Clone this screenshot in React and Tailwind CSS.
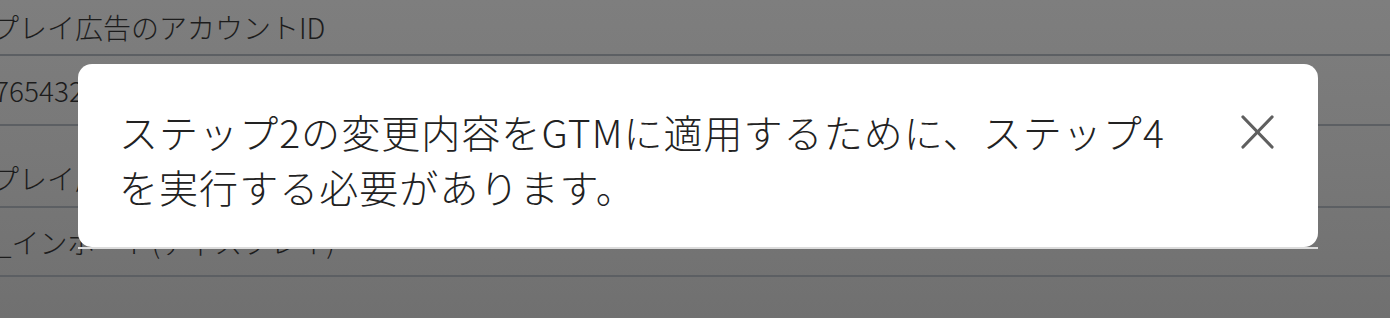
import React from "react";

const font = { fontFamily: '"Noto Sans CJK JP", "Noto Sans", sans-serif' };

export default function App() {
  return (
    <div
      className="relative w-[1390px] h-[318px] overflow-hidden bg-[linear-gradient(180deg,#7e7e7e_0%,#777777_55%,#707070_100%)] text-[#1c1c1c]"
      style={font}
    >
      {/* Background form rows (dimmed) */}
      <div className="flex flex-col text-[28px] leading-none whitespace-nowrap font-light">
        <div className="h-[56px] flex items-center border-b-2 border-[#5c5f63]">
          <span className="-ml-[9px]">プレイ広告のアカウントID</span>
        </div>
        <div className="h-[70px] flex items-center border-b-2 border-[#5c5f63]">
          <span className="-ml-[6px]">7654321098</span>
        </div>
        <div className="h-[82px] pt-[24px] flex items-center border-b-2 border-[#5c5f63]">
          <span className="-ml-[9px]">プレイ広告のラベル</span>
        </div>
        <div className="h-[69px] flex items-center border-b-2 border-[#5c5f63]">
          <span className="-ml-[4px]">_インポート(ディスプレイ)</span>
        </div>
      </div>

      {/* Toast / modal */}
      <div className="absolute left-[78px] top-[64px] w-[1240px] flex flex-col">
        <div className="h-[183px] bg-white rounded-[14px] flex items-start pl-[41px] pr-[44px] pt-[40px]">
          <p className="flex-1 text-[39px] leading-[55px] text-[#222222] tracking-[1.05px] font-light">
            ステップ2の変更内容をGTMに適用するために、ステップ4
            <br />
            を実行する必要があります。
          </p>
          <svg
            className="mt-[11px] shrink-0"
            width="33"
            height="34"
            viewBox="0 0 33 34"
            fill="none"
            stroke="#5f5f5f"
            strokeWidth="3.2"
            strokeLinecap="round"
          >
            <line x1="2" y1="2" x2="31" y2="32" />
            <line x1="31" y1="2" x2="2" y2="32" />
          </svg>
        </div>
        <div className="h-[2px] bg-[#dcdcdc]" />
      </div>
    </div>
  );
}
